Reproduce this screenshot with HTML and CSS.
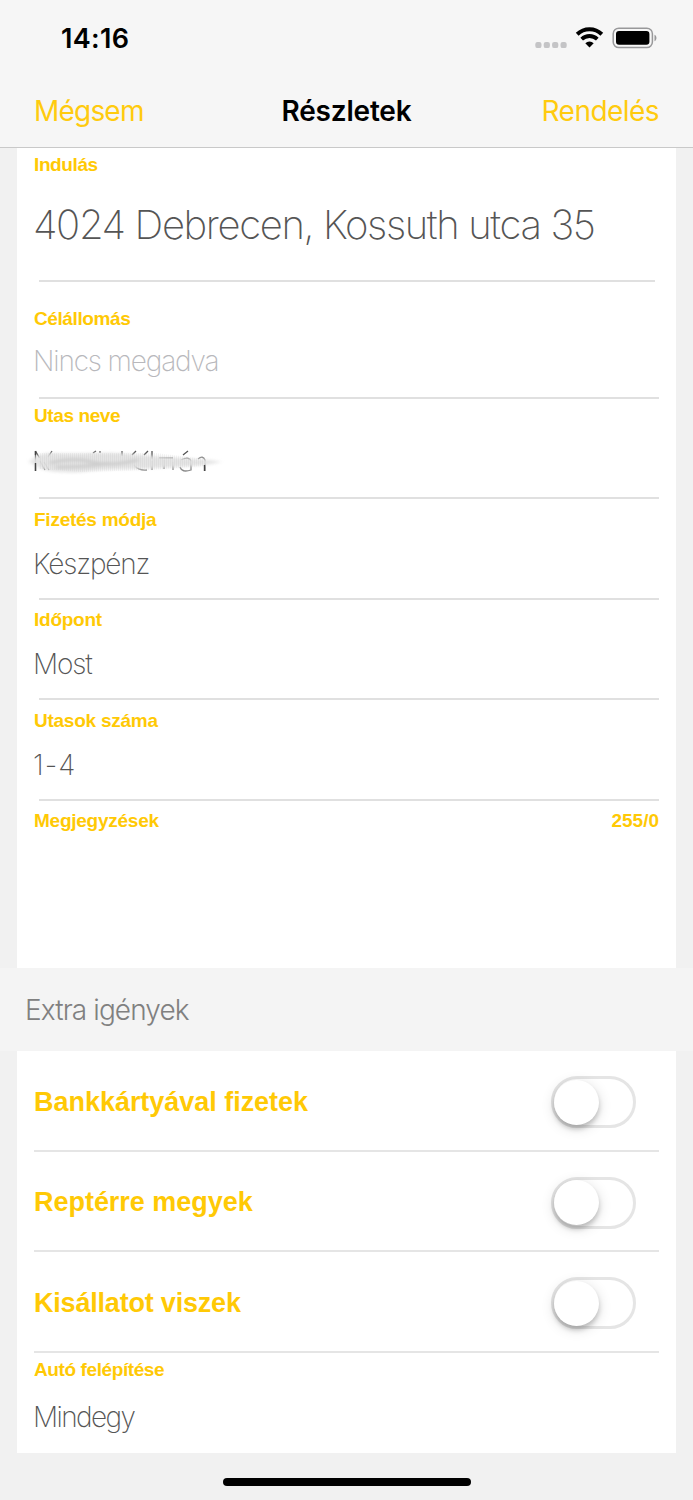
FILE: index.html
```html
<!DOCTYPE html>
<html lang="hu">
<head>
<meta charset="utf-8">
<title>Részletek</title>
<link rel="stylesheet" href="styles.css">
</head>
<body>
<div class="screen">
  <header class="top">
    <div class="status">
      <span class="time">14:16</span>
      <svg class="status-icons" width="124" height="26" viewBox="0 0 124 26">
        <g fill="#c4c4c6">
          <rect x="0.3" y="16.9" width="6.2" height="6.2" rx="2.2"/>
          <rect x="8.7" y="16.9" width="6.2" height="6.2" rx="2.2"/>
          <rect x="17.1" y="16.9" width="6.2" height="6.2" rx="2.2"/>
          <rect x="25.5" y="16.9" width="6.2" height="6.2" rx="2.2"/>
        </g>
        <g fill="none" stroke="#000">
          <path d="M42.2 9.2a17.6 17.6 0 0 1 24.6 0" stroke-width="4"/>
          <path d="M46.7 14.1a11.3 11.3 0 0 1 15.6 0" stroke-width="3.8"/>
        </g>
        <path d="M50.3 18.2a6 6 0 0 1 8.4 0L54.5 22.6z"/>
        <rect x="78.2" y="3.2" width="39.2" height="19.4" rx="5.6" fill="none" stroke="#98989a" stroke-width="1.5"/>
        <rect x="81" y="6" width="33.4" height="13.8" rx="3"/>
        <path d="M119.5 9.8c2.6 1 2.6 5.4 0 6.4z" fill="#98989a"/>
      </svg>
    </div>
    <nav class="nav">
      <span class="nav-action cancel">Mégsem</span>
      <span class="nav-title">Részletek</span>
      <span class="nav-action order">Rendelés</span>
    </nav>
  </header>

  <section class="card">
    <div class="field from"><div class="label">Indulás</div><div class="value address">4024 Debrecen, Kossuth utca 35</div></div>
    <div class="field to"><div class="label">Célállomás</div><div class="value empty">Nincs megadva</div></div>
    <div class="field name"><div class="label">Utas neve</div>
      <svg class="smudge" width="200" height="32" viewBox="0 0 200 32">
        <defs>
          <filter id="soft" x="-10%" y="-40%" width="120%" height="180%"><feGaussianBlur stdDeviation="2 1.5"/></filter>
          <pattern id="grain" width="2" height="4" patternUnits="userSpaceOnUse"><rect width="1" height="4" fill="#999" opacity=".1"/></pattern>
        </defs>
        <g fill="none" stroke="#555" stroke-width="1.3">
          <path d="M9.500 6v20M9.500 6l4 7M14 16l5 9M18 17l5 8M26 6l-4 6M67 8l3-2M74 6v2M96 6v5M106 10l4-4M118 10l4-4M126 6v8M157 10l5-4"/>
          <path d="M108 20q5 6 13 5M126 16v9M133 13h14M138 15v9M147 17v8M155 15q8-4 10 1v9q-9 3-11-3M172 14q5-4 7 1v11" opacity=".7"/>
        </g>
        <path d="M3 17Q12 7 28 8T66 8T104 9L126 11L184 15L196 17L180 20L154 22L110 24Q76 24 58 27Q30 29 15 24z" fill="#e4e4e4" opacity=".94" filter="url(#soft)"/>
        <path d="M14 8H130L178 14V21L124 25L55 27L14 24z" fill="url(#grain)"/>
        <path d="M24 18Q48 12 66 17T112 15M30 22Q65 22 83 18" fill="none" stroke="#cecece" stroke-width="3" filter="url(#soft)"/>
        <path d="M9.500 6v4M9.500 18v8M178.500 20v6" stroke="#444" stroke-width="1.4"/>
      </svg>
    </div>
    <div class="field"><div class="label wide">Fizetés módja</div><div class="value pay">Készpénz</div></div>
    <div class="field"><div class="label wide">Időpont</div><div class="value">Most</div></div>
    <div class="field"><div class="label wide">Utasok száma</div><div class="value count">1-4</div></div>
    <div class="field notes"><div class="label wide">Megjegyzések</div><div class="label counter">255/0</div></div>
  </section>

  <h2 class="section-title"><span>Extra igények</span></h2>

  <section class="card extras">
    <div class="option"><span>Bankkártyával fizetek</span><span class="switch"><span class="knob"></span></span></div>
    <div class="option"><span>Reptérre megyek</span><span class="switch"><span class="knob"></span></span></div>
    <div class="option"><span class="pet">Kisállatot viszek</span><span class="switch"><span class="knob"></span></span></div>
    <div class="field body-type"><div class="label">Autó felépítése</div><div class="value mind">Mindegy</div></div>
  </section>

  <footer class="home"><div class="home-bar"></div></footer>
</div>
</body>
</html>
```
FILE: styles.css
```css
* { box-sizing: border-box; }
body { margin: 0; }
.screen {
  width: 693px; height: 1500px; overflow: hidden;
  display: flex; flex-direction: column;
  background: #f1f1f1; font-family: Inter, "Liberation Sans", sans-serif;
}
.top { height: 148px; flex: none; background: #f6f6f6; border-bottom: 1px solid #c9c9c9; }
.status {
  height: 76px; padding: 0 34px 0 61px;
  display: flex; align-items: center; justify-content: space-between;
}
.time { font-size: 27px; font-weight: 600; letter-spacing: 0.3px; }
.nav {
  height: 70px; padding: 0 34px; font-size: 28px; line-height: 70px;
  display: grid; grid-template-columns: 1fr auto 1fr;
}
.nav-action { color: #ffcb0f; letter-spacing: -0.8px; }
.order { text-align: right; letter-spacing: -0.55px; }
.nav-title { font-weight: 600; letter-spacing: -0.2px; }
.card {
  width: 659px; margin: 0 auto; padding: 0 17px; flex: none;
  background: #fff;
}
.field {
  height: 100.5px; padding-top: 9.5px;
  background: linear-gradient(#e0e0e0, #e0e0e0) 5px 100% / 620px 2px no-repeat;
}
.label {
  height: 22px; color: #ffc905; white-space: nowrap;
  font: bold 19px/22px "Liberation Sans", sans-serif; letter-spacing: -0.4px;
}
.wide { letter-spacing: -0.25px; }
.counter { letter-spacing: 0; }
.value {
  margin-top: 15px; height: 36px; line-height: 36px; white-space: nowrap;
  font-size: 28px; font-weight: 160; color: #555; letter-spacing: -1.15px;
  margin-left: -1px;
}
.from { height: 134px; padding-top: 6px; background-size: 616px 2px; }
.address { margin-top: 24px; height: 50px; font-size: 40px; line-height: 50px; letter-spacing: -1.36px; }
.to { height: 117px; padding-top: 26px; }
.to .value { margin-top: 13px; color: #b8b8bc; }
.name { height: 100px; padding-top: 6px; }
.smudge { display: block; margin: 18px 0 0 -8px; }
.count { letter-spacing: 1px; }
.notes {
  height: 167px; display: flex; justify-content: space-between; background: none;
}
.section-title {
  height: 83px; margin: 0; padding: 1px 0 0 25px; flex: none;
  background: #f4f4f4; color: #808080;
  font-size: 28px; font-weight: 300; line-height: 83px; letter-spacing: -0.9px;
}
.extras { height: 402px; padding-top: 1px; }
.option {
  height: 100.4px; padding: 1.4px 23px 0 0;
  display: flex; align-items: center; justify-content: space-between;
  color: #ffc905; font: bold 27px "Liberation Sans", sans-serif; letter-spacing: -0.03px;
  background: linear-gradient(#e5e5e5, #e5e5e5) 0 100% / 100% 2px no-repeat;
}
.pet { letter-spacing: -0.2px; }
.switch {
  width: 85px; height: 52px; padding: 0.5px 0; border: 3px solid #e5e5e5;
  border-radius: 26px; background: #fff;
}
.knob {
  display: block; width: 45px; height: 45px; border-radius: 50%;
  background: #fff; box-shadow: 0 4px 5px rgba(0,0,0,.2), 0 3px 14px rgba(0,0,0,.14);
}
.body-type { padding-top: 6px; background: none; }
.mind { margin-top: 18px; letter-spacing: -1.6px; }
.home { flex: 1; display: flex; justify-content: center; padding-top: 25px; }
.home-bar { width: 248px; height: 8px; border-radius: 4px; background: #000; }
```
